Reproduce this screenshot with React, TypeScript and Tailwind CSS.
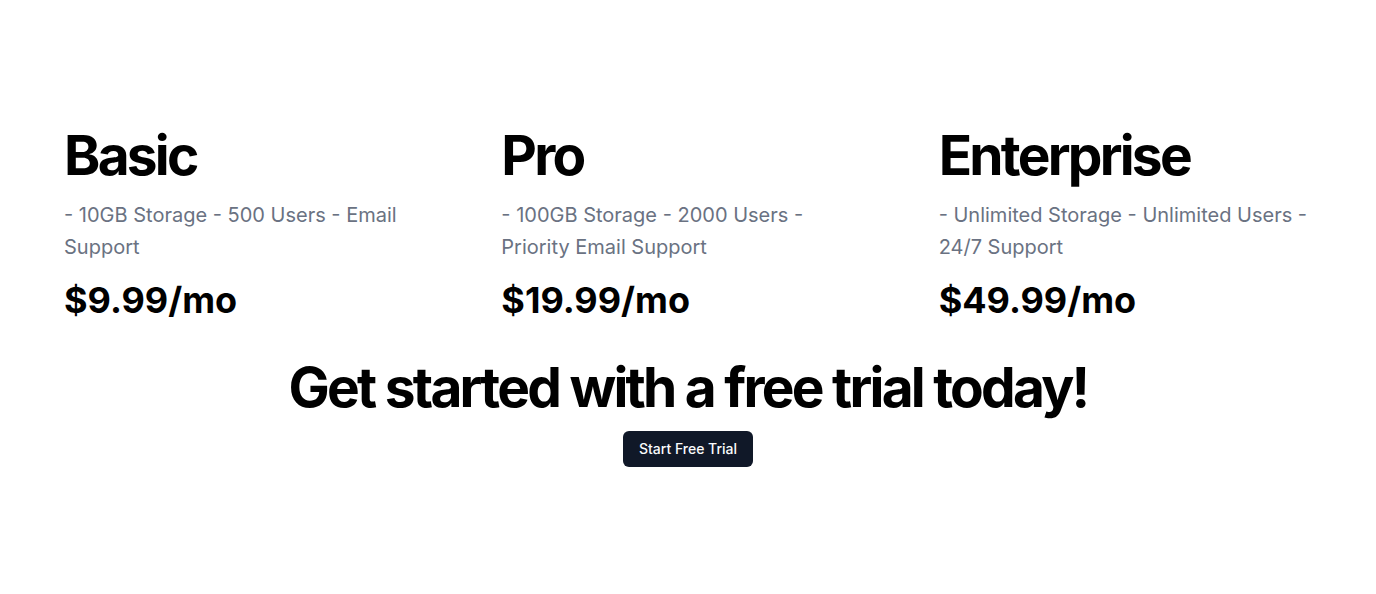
const plans = [
  {
    name: "Basic",
    features: "- 10GB Storage - 500 Users - Email Support",
    price: "$9.99/mo",
  },
  {
    name: "Pro",
    features: "- 100GB Storage - 2000 Users - Priority Email Support",
    price: "$19.99/mo",
  },
  {
    name: "Enterprise",
    features: "- Unlimited Storage - Unlimited Users - 24/7 Support",
    price: "$49.99/mo",
  },
];

const PlanCard = ({ name, features, price }: { name: string; features: string; price: string }) => {
  return (
    <div className="flex flex-col space-y-4">
      <h3 className="text-[55px] leading-none font-bold tracking-tighter">{name}</h3>
      <p className="text-xl/relaxed text-gray-500">{features}</p>
      <p className="text-4xl font-bold">{price}</p>
    </div>
  );
};

export default function App() {
  return (
    <section
      className="flex min-h-screen w-full items-center justify-center bg-white text-black"
      style={{ fontFamily: "Inter, 'Noto Sans', sans-serif" }}
    >
      <div className="w-full px-16">
        <div className="grid grid-cols-3 gap-16">
          {plans.map((plan) => (
            <PlanCard key={plan.name} {...plan} />
          ))}
        </div>
        <div className="mt-10 flex flex-col items-center space-y-4">
          <h2 className="text-[55px] leading-none font-bold tracking-tighter">
            Get started with a free trial today!
          </h2>
          <button className="inline-flex h-9 items-center justify-center rounded-md bg-gray-900 px-4 text-sm font-medium text-gray-50">
            Start Free Trial
          </button>
        </div>
      </div>
    </section>
  );
}
